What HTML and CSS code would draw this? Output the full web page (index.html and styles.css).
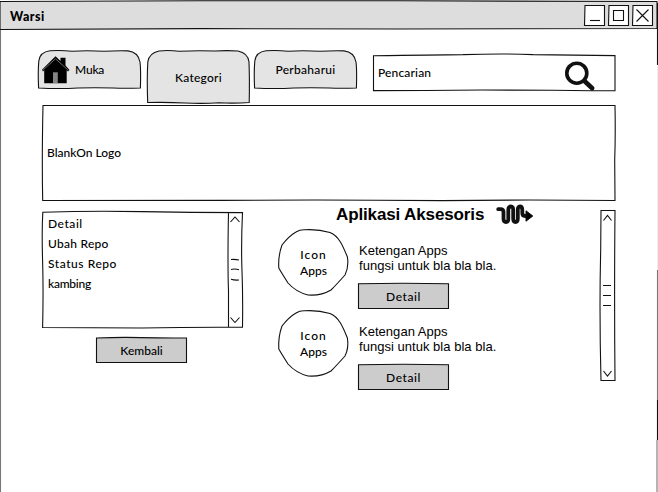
FILE: index.html
```html
<!DOCTYPE html>
<html lang="id">
<head>
<meta charset="utf-8">
<title>Warsi</title>
<link rel="stylesheet" href="styles.css">
</head>
<body>
<div class="window">
  <svg class="outline" viewBox="0 0 658 492"><path stroke="#777" d="M.5 2V492"/><path d="M657.5 3V65M657.5 400V440"/><path stroke="#eee" d="M657.5 66V400"/><path stroke="#777" d="M657.5 270V400M657 440V492"/></svg>
  <header class="titlebar">
    <svg class="outline" viewBox="0 0 658 30"><path fill="#ddd" d="M0 1.5L200 .7L400 .8L657 1.5V28.5L400 29L200 28.6L0 29.5Z"/></svg>
    <h1 class="title">Warsi</h1>
    <div class="controls">
      <svg viewBox="0 0 22 22"><path fill="#fff" d="M1 .5H20.5V20.5H.5Z"/><path d="M6 15.5H16"/></svg>
      <svg viewBox="0 0 22 22"><path fill="#fff" d="M1 .5H20.5V20.5H.5Z"/><path d="M5.5 5.5H15.5V15.5H5.5Z"/></svg>
      <svg viewBox="0 0 22 22"><path fill="#fff" d="M1 .5H20.5V20.5H.5Z"/><path d="M4.5 4.5L16.5 16.5M16.5 4.5L4.5 16.5"/></svg>
    </div>
  </header>

  <nav class="toolbar">
    <div class="tab tab-home">
      <svg class="outline" viewBox="0 0 103 39"><path fill="#e4e4e4" d="M.6 38Q-.2 22 .8 11Q2 2 12 .8Q22 -.1 34 1.2Q50 .2 66 1.3Q79 .6 90 .9Q100 2 102 12Q103 20 102.4 38Q88 38.5 75 38Q57 37.5 40 38Q20 39 .6 38Z"/></svg>
      <svg class="home" viewBox="0 0 28 28"><path fill="#000" stroke="none" d="M13.5 .3L18.5 5V1.8H23.5V9.6L27.5 14L26 15.4L24.7 14.2V27.3H2.2V14.2L1 15.5L0 13.8Z"/><path fill="#858585" stroke="none" d="M11 16.3H15.8V27H11Z"/><path stroke="#888" stroke-width=".8" d="M.5 14.5L13.5 2.8L26.5 14.5"/></svg>
      <span class="t-muka">Muka</span>
    </div>
    <div class="tab tab-active">
      <svg class="outline" viewBox="0 0 103 54"><path fill="#e4e4e4" d="M.7 52.5Q-.2 30 .8 12Q2 3 12 1Q21 0 32 1.2Q50 .4 68 1Q80 .2 91 1Q101 3 102 12Q102.7 30 102.2 52.5Q88 53.5 72 52.8Q56 53.8 38 53Q20 52 .7 52.5Z"/></svg>
      <span class="t-kategori">Kategori</span>
    </div>
    <div class="tab tab-update">
      <svg class="outline" viewBox="0 0 103 39"><path fill="#e4e4e4" d="M.6 38Q-.2 22 .8 11Q2 2 12 .8Q22 -.1 34 1.2Q50 .2 66 1.3Q79 .6 90 .9Q100 2 102 12Q103 20 102.4 38Q88 38.5 75 38Q57 37.5 40 38Q20 39 .6 38Z"/></svg>
      <span class="t-update">Perbaharui</span>
    </div>
    <div class="search">
      <svg class="outline" viewBox="0 0 243 38"><path d="M.5 1.8Q60 .8 90 .6Q130 -.6 160 .6L242 1.6V36.6Q210 37 180 36.3L110 36Q50 36.6 .5 36.6Z"/></svg>
      <span class="t-search">Pencarian</span>
      <svg class="lens" viewBox="0 0 32 32"><circle cx="12.8" cy="12.2" r="10" stroke-width="3.6"/><path stroke-width="4.6" stroke-linecap="round" d="M21 20.5L28.2 27.2"/></svg>
    </div>
  </nav>

  <section class="banner">
    <svg class="outline" viewBox="0 0 574 97"><path d="M1 .5H573Q573.6 30 572.7 55L573 95.5Q480 94.6 400 95.6Q280 94.6 180 95.4Q80 95.6 .7 95.5Q-.2 55 1 .5Z"/></svg>
    <span class="t-logo">BlankOn Logo</span>
  </section>

  <main class="content">
    <aside class="sidebar">
      <div class="list">
        <svg class="outline" viewBox="0 0 202 118"><path d="M.8 1.2Q50 -.4 100 .6T200.5 1.6Q199 35 200 60T200.5 116.3Q150 116 100 117Q50 116.5 .6 116.5Q1.5 80 .6 50T.8 1.2ZM186.5 1Q185.5 55 186.5 80V116.5M188.5 11L193 6L197.5 11M188.5 106.5L193 111.5L197.5 106.5M189 48.5Q193 48 197 49M189 58.5Q193 57.5 197 58.8M189 68.3Q193 69.5 197 69"/></svg>
        <ul>
          <li class="t-detail">Detail</li>
          <li class="t-ubah">Ubah Repo</li>
          <li class="t-status">Status Repo</li>
          <li class="t-kambing">kambing</li>
        </ul>
      </div>
      <div class="button back">
        <svg class="outline" viewBox="0 0 91 27"><path fill="#ccc" d="M.5 1Q25 0 45 .6T90.5 1V25.5H.5Z"/></svg>
        <span class="t-back">Kembali</span>
      </div>
    </aside>

    <section class="apps">
      <h2><span>Aplikasi Aksesoris</span>
        <svg class="squiggle" viewBox="0 0 38 22"><path stroke-width="3.8" stroke-linejoin="round" stroke-linecap="round" d="M2.2 5.2H4.5Q7.5 5.2 7.5 8V14.5Q7.5 18 10 18T12.3 14.5V6Q12.3 2.5 14.8 2.5T17.2 6V14.5Q17.2 18 19.5 18T21.8 14.5V6Q21.8 2.5 24 2.5T26.3 6V9Q26.3 12 29 12H31"/><path fill="#000" stroke-width="1" stroke-linejoin="round" d="M30 6.8L36.8 12L30 17.2Z"/></svg>
      </h2>
      <article class="app">
        <div class="badge">
          <svg class="outline" viewBox="0 0 71 67"><path d="M27 .8Q40 0 52 3.5C61 7 65 17 69.4 28Q71 38 67 46Q59 55 53 61Q43 67 30 66Q18 63 10 54Q3 43 .8 39Q0 27 4 16Q11 7 18 3Q22 .5 27 .8Z"/></svg>
          <span><span class="t-icon">Icon</span><br>Apps</span>
        </div>
        <div class="info">
          <p>Ketengan Apps<br>fungsi untuk bla bla bla.</p>
          <div class="button">
            <svg class="outline" viewBox="0 0 91 27"><path fill="#ccc" d="M.5 .8Q45 -.3 90.5 .8V25.5H.5Z"/></svg>
            <span class="t-detail">Detail</span>
          </div>
        </div>
      </article>
      <article class="app">
        <div class="badge">
          <svg class="outline" viewBox="0 0 71 67"><path d="M27 .8Q40 0 52 3.5C61 7 65 17 69.4 28Q71 38 67 46Q59 55 53 61Q43 67 30 66Q18 63 10 54Q3 43 .8 39Q0 27 4 16Q11 7 18 3Q22 .5 27 .8Z"/></svg>
          <span><span class="t-icon">Icon</span><br>Apps</span>
        </div>
        <div class="info">
          <p>Ketengan Apps<br>fungsi untuk bla bla bla.</p>
          <div class="button">
            <svg class="outline" viewBox="0 0 91 27"><path fill="#ccc" d="M.5 .8Q45 -.3 90.5 .8V25.5H.5Z"/></svg>
            <span class="t-detail">Detail</span>
          </div>
        </div>
      </article>
    </section>

    <svg class="scrollbar" viewBox="0 0 16 172"><path d="M1 .5H15Q14.2 85 15 170.5H1Q-.8 100 .7 40ZM3.5 10.5L7.5 5.5L11.5 10.5M3.5 161L7.5 166L11.5 161M3 75.5H11M3 85.5H11M3 95.5H11"/></svg>
  </main>
</div>
</body>
</html>
```
FILE: styles.css
```css
* { box-sizing: border-box; }
body { margin: 0; background: #fff; color: #000; font: 500 12px/20px Lato, sans-serif; }
h1, h2, p, ul { margin: 0; padding: 0; }
ul { list-style: none; }
svg { display: block; flex: none; fill: none; stroke: #111; stroke-width: 1.1; overflow: visible; }
span, li, h1 { white-space: nowrap; position: relative; }
.outline { position: absolute; top: 0; left: 0; width: 100%; height: 100%; }

.window { position: relative; width: 658px; height: 492px; overflow: hidden; }
.titlebar { position: relative; display: flex; justify-content: space-between; height: 30px; padding: 5px 4px 0 10px; }
.title { font-size: 12.5px; line-height: 24px; font-weight: 900; letter-spacing: .5px; }
.controls { position: relative; display: flex; gap: 2px; }
.controls svg { width: 22px; height: 22px; }

.toolbar { display: flex; align-items: flex-start; height: 75px; padding: 20px 0 0 38px; }
.tab { position: relative; display: flex; align-items: center; justify-content: center; width: 103px; height: 39px; }
.tab-home { justify-content: flex-start; padding-left: 4px; }
.home { position: relative; width: 28px; height: 28px; margin-right: 5px; }
.tab-active { height: 54px; margin: 0 4px 0 6px; padding-top: 2px; }
.search { position: relative; display: flex; align-items: center; justify-content: space-between; width: 243px; height: 38px; margin: 4px 0 0 16px; padding: 0 20px 0 5px; }
.lens { position: relative; width: 32px; height: 32px; margin-top: 7px; }

.banner { position: relative; display: flex; align-items: center; width: 574px; height: 97px; margin-left: 42px; padding: 0 0 2px 5px; }
.content { display: flex; align-items: flex-start; padding-left: 42px; }
.sidebar { width: 202px; padding-top: 9px; }
.list { position: relative; height: 118px; padding: 3px 0 0 6px; }
.button { position: relative; display: grid; place-items: center; width: 91px; height: 27px; }
.back { margin: 8px 0 0 54px; }

.apps { width: 322px; padding: 3px 0 0 34px; }
h2 { display: flex; gap: 12px; height: 24px; padding-left: 58px; font: 700 17px/20px "Liberation Sans", sans-serif; letter-spacing: -.13px; }
.squiggle { width: 38px; height: 22px; margin-top: -1px; }
.app { display: flex; gap: 9px; height: 81px; }
.badge { position: relative; display: grid; place-items: center; width: 71px; height: 67px; line-height: 16px; text-align: center; }
.info { padding-top: 14px; }
.info p { margin: 0 0 10px 1px; font: 13px/15px "Liberation Sans", sans-serif; letter-spacing: .03px; white-space: nowrap; }
.scrollbar { width: 16px; height: 172px; margin: 8px 0 0 34px; }

.t-kategori, .t-ubah { letter-spacing: .25px; }
.t-update { letter-spacing: .3px; }
.t-search { letter-spacing: .15px; }
.t-detail, .t-status { letter-spacing: .55px; }
.t-kambing { letter-spacing: -.25px; }
.t-icon { letter-spacing: 1px; }
.t-muka { letter-spacing: -.2px; }
```
